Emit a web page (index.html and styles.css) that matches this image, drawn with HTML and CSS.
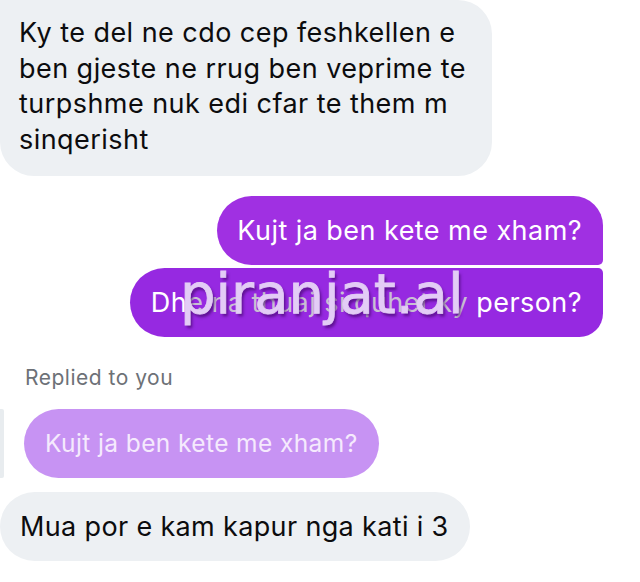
FILE: index.html
```html
<!DOCTYPE html>
<html>
<head>
<meta charset="utf-8">
<link rel="stylesheet" href="styles.css">
</head>
<body>
<div class="chat">
  <div class="row left">
    <div class="bubble gray multi">Ky te del ne cdo cep feshkellen e<br>ben gjeste ne rrug ben veprime te<br>turpshme nuk edi cfar te them m<br>sinqerisht</div>
  </div>
  <div class="row right first-out">
    <div class="bubble purple top">Kujt ja ben kete me xham?</div>
  </div>
  <div class="row right second-out">
    <div class="bubble purple bottom">Dh<span class="faded">e na thuaj si quhet ky</span> person?</div>
  </div>
  <div class="replied">Replied to you</div>
  <div class="row reply-row">
    <div class="reply-bar"></div>
    <div class="bubble quoted">Kujt ja ben kete me xham?</div>
  </div>
  <div class="row left last">
    <div class="bubble gray pill">Mua por e kam kapur nga kati i 3</div>
  </div>
  <div class="watermark">piranjat.al</div>
</div>
</body>
</html>
```

FILE: styles.css
```css
html, body {
  margin: 0;
  padding: 0;
  background: #ffffff;
}

.chat {
  position: relative;
  width: 640px;
  height: 582px;
  overflow: hidden;
  font-family: Inter, "Noto Sans", sans-serif;
  font-size: 27px;
  letter-spacing: 0.45px;
  display: flex;
  flex-direction: column;
}

.row {
  display: flex;
}

.row.right {
  justify-content: flex-end;
  padding-right: 37px;
}

.bubble {
  box-sizing: border-box;
  height: 69px;
  line-height: 69px;
  white-space: nowrap;
}

.gray {
  background: #edf0f3;
  color: #0c0c0e;
}

.multi {
  width: 492px;
  height: 176px;
  line-height: 35.5px;
  padding: 15px 20px 0 19px;
  border-radius: 0 34px 34px 34px;
  white-space: normal;
}

.first-out {
  margin-top: 20px;
}

.second-out {
  margin-top: 3px;
}

.purple {
  color: #ffffff;
  padding: 0 21px 0 20px;
}

.purple.top {
  background: #a030e2;
  border-radius: 35px 30px 5px 35px;
}

.purple.bottom {
  background: #9629e1;
  border-radius: 35px 5px 24px 35px;
  padding-left: 21px;
}

.faded {
  color: #c9bfd3;
}

.replied {
  margin-top: 29px;
  padding-left: 25px;
  font-size: 21px;
  letter-spacing: 0.5px;
  line-height: 24px;
  color: #6d7177;
}

.reply-row {
  margin-top: 19px;
  align-items: stretch;
}

.reply-bar {
  width: 4px;
  height: 69px;
  background: #e8ecef;
  border-radius: 0 2px 2px 0;
}

.quoted {
  margin-left: 20px;
  background: #c793f3;
  color: #f5eafd;
  font-size: 24.5px;
  letter-spacing: 0.4px;
  padding: 0 21px;
  border-radius: 35px;
}

.last {
  margin-top: 14px;
}

.pill {
  padding: 0 21px 0 20px;
  letter-spacing: 0.35px;
  border-radius: 35px;
}

.watermark {
  position: absolute;
  left: 180px;
  top: 254px;
  font-family: "DejaVu Sans", sans-serif;
  font-size: 56px;
  font-weight: 400;
  line-height: 80px;
  letter-spacing: 0;
  color: #e3ccf6;
  -webkit-text-stroke: 0.8px #e3ccf6;
  text-shadow: 2px 3px 3px rgba(55, 0, 90, 0.6);
  white-space: nowrap;
}
```
